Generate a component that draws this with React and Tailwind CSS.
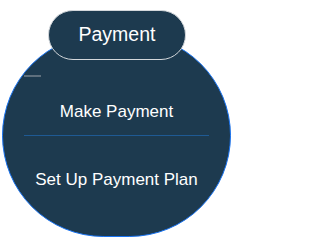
import React from 'react';

const items = ['Make Payment', 'Set Up Payment Plan'];

const App = () => {
  return (
    <div
      className="relative w-[276px] h-[242px] bg-white overflow-hidden"
      style={{ fontFamily: '"Liberation Sans", Arial, sans-serif' }}
    >
      {/* menu body */}
      <div className="ml-[2px] mt-[34px] w-[229px] h-[203px] rounded-full border-[1.5px] border-[#1873f2] bg-[#1d3a4f] px-[21px] flex flex-col">
        <div className="mt-[40px] w-[17px] h-[2px] bg-[#5e6f7d]" />
        <div className="mt-[25px] text-center text-white text-[17px] leading-[20px]">
          {items[0]}
        </div>
        <div className="mt-[13px] h-px bg-[#1f5a94]" />
        <div className="mt-[34px] text-center text-white text-[17px] leading-[20px]">
          {items[1]}
        </div>
      </div>

      {/* header pill */}
      <div className="absolute left-[48px] top-[10px] w-[138px] h-[50px] rounded-full border-[1.5px] border-[#d3d7db] bg-[#1d3a4f] flex items-center justify-center">
        <span className="text-white text-[19.5px] leading-none">Payment</span>
      </div>
    </div>
  );
};

export default App;
